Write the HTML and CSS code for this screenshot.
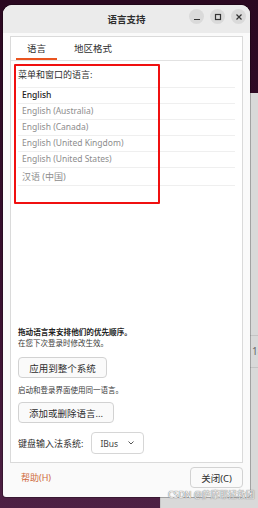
FILE: index.html
```html
<!DOCTYPE html>
<html>
<head>
    <title>语言支持</title>
    <meta name="viewport" content="width=device-width, initial-scale=1">
    <link rel="stylesheet" href="styles.css">
</head>
<body>
    <div class="desktop">
        <div class="back-window">
            <div class="back-row">18</div>
        </div>

        <div class="window">
            <div class="titlebar">
                <div class="title">语言支持</div>
                <div class="controls">
                    <span class="ctl">
                        <svg width="8" height="8" viewBox="0 0 8 8"><path d="M1 6.5h6" stroke="#333" stroke-width="1.2"/></svg>
                    </span>
                    <span class="ctl">
                        <svg width="8" height="8" viewBox="0 0 8 8"><rect x="1.5" y="1.5" width="5" height="5" fill="none" stroke="#333" stroke-width="1.2"/></svg>
                    </span>
                    <span class="ctl">
                        <svg width="8" height="8" viewBox="0 0 8 8"><path d="M1.5 1.5l5 5M6.5 1.5l-5 5" stroke="#333" stroke-width="1.2"/></svg>
                    </span>
                </div>
            </div>

            <div class="body">
                <div class="notebook">
                    <div class="tabs">
                        <div class="tab active">语言</div>
                        <div class="tab">地区格式</div>
                    </div>
                    <div class="page">
                        <div class="lang-list">
                            <div class="list-label">菜单和窗口的语言:</div>
                            <div class="row first">English</div>
                            <div class="row">English (Australia)</div>
                            <div class="row">English (Canada)</div>
                            <div class="row">English (United Kingdom)</div>
                            <div class="row">English (United States)</div>
                            <div class="row cjk">汉语 (中国)</div>
                        </div>
                        <div class="mark"></div>

                        <div class="settings">
                            <div class="hint bold">拖动语言来安排他们的优先顺序。</div>
                            <div class="hint">在您下次登录时修改生效。</div>
                            <button class="btn apply">应用到整个系统</button>
                            <div class="hint gap">启动和登录界面使用同一语言。</div>
                            <button class="btn add">添加或删除语言...</button>
                            <div class="im-row">
                                <span class="im-label">键盘输入法系统:</span>
                                <div class="select">
                                    <span>IBus</span>
                                    <svg width="8" height="6" viewBox="0 0 8 6"><path d="M1.5 1.5l2.5 2.5 2.5-2.5" fill="none" stroke="#555" stroke-width="1"/></svg>
                                </div>
                            </div>
                        </div>
                    </div>
                </div>

                <div class="footer">
                    <span class="help">帮助(H)</span>
                    <button class="btn close">关闭(C)</button>
                </div>
            </div>
        </div>

        <div class="watermark">CSDN @萨摩耶拯救团</div>
    </div>
</body>
</html>
```

FILE: styles.css
```css
body {
    margin: 0;
    font-family: "Noto Sans", "Noto Sans CJK SC", sans-serif;
    color: #333;
}
.desktop {
    position: relative;
    width: 258px;
    height: 508px;
    overflow: hidden;
    background: linear-gradient(180deg, #2a0820 0%, #3a1030 60%, #4e2144 100%);
}
.back-window {
    position: absolute;
    left: 160px;
    top: 93px;
    right: 0;
    bottom: 0;
    background: #d9d9d9;
    border-left: 1px solid #c8c8c8;
}
.back-row {
    margin-top: 242px;
    padding-left: 91px;
    height: 31px;
    line-height: 31px;
    font-size: 10px;
    color: #666;
    white-space: nowrap;
    border-top: 1px solid #c4c4c4;
    border-bottom: 1px solid #c4c4c4;
}
.window {
    position: absolute;
    left: 3px;
    top: 5px;
    width: 247px;
    height: 492px;
    display: flex;
    flex-direction: column;
    background: #fafafa;
    border-radius: 9px 9px 3px 3px;
    overflow: hidden;
    box-shadow: 0 0 0 1px rgba(0,0,0,0.25);
}
.titlebar {
    position: relative;
    height: 28px;
    background: #ebebeb;
    display: flex;
    align-items: center;
    justify-content: center;
}
.title {
    font-size: 9.5px;
    font-weight: bold;
    color: #2e2e2e;
}
.controls {
    position: absolute;
    right: 4px;
    top: 4px;
    display: flex;
    gap: 6px;
}
.ctl {
    width: 15px;
    height: 15px;
    border-radius: 50%;
    background: #dadada;
    display: flex;
    align-items: center;
    justify-content: center;
}
.body {
    flex: 1;
    display: flex;
    flex-direction: column;
    padding: 3px 7px 0 7px;
}
.notebook {
    height: 425px;
    border: 1px solid #dadada;
    background: #fff;
    display: flex;
    flex-direction: column;
}
.tabs {
    display: flex;
    height: 23px;
    padding-left: 5px;
    border-bottom: 1px solid #e2e2e2;
}
.tab {
    font-size: 9.5px;
    line-height: 23px;
    color: #2e2e2e;
    box-sizing: border-box;
    text-align: center;
}
.tab.active {
    width: 41px;
    border-bottom: 2px solid #e95420;
}
.tab + .tab {
    width: 72px;
}
.page {
    position: relative;
    flex: 1;
    display: flex;
    flex-direction: column;
    justify-content: space-between;
    padding: 6px 7px 8px 7px;
}
.list-label {
    font-size: 9px;
    line-height: 16px;
    height: 20px;
    color: #2e2e2e;
}
.row {
    height: 15px;
    line-height: 14px;
    border-top: 1px solid #efefef;
    padding-left: 4px;
    font-size: 8.5px;
    color: #8d8d8d;
}
.row.first {
    color: #222;
    font-weight: 500;
}
.row.cjk {
    height: 17px;
    line-height: 17px;
    font-size: 9px;
    border-bottom: 1px solid #efefef;
}
.mark {
    position: absolute;
    left: 3px;
    top: 3px;
    width: 142px;
    height: 136px;
    border: 2px solid #f01010;
    border-radius: 1px;
}
.settings {
    display: flex;
    flex-direction: column;
    align-items: flex-start;
}
.hint {
    font-size: 7.5px;
    line-height: 11px;
    color: #3a3a3a;
}
.hint.bold {
    font-size: 7.6px;
    font-weight: bold;
    color: #222;
}
.hint.gap {
    margin-top: 7px;
}
.btn {
    font-family: "Noto Sans", "Noto Sans CJK SC", sans-serif;
    font-size: 9.5px;
    color: #2e2e2e;
    background: #fafafa;
    border: 1px solid #d2d2d2;
    border-radius: 4px;
    height: 21px;
    padding: 0;
    box-sizing: border-box;
}
.btn.apply {
    width: 89px;
    margin-top: 8px;
}
.btn.add {
    width: 96px;
    margin-top: 6px;
}
.im-row {
    display: flex;
    align-items: center;
    gap: 8px;
    margin-top: 9px;
}
.im-label {
    font-size: 9px;
    color: #2e2e2e;
}
.select {
    width: 53px;
    height: 22px;
    box-sizing: border-box;
    border: 1px solid #d6d6d6;
    border-radius: 4px;
    display: flex;
    align-items: center;
    justify-content: space-between;
    padding: 0 8px;
    font-size: 8.5px;
    color: #444;
}
.footer {
    flex: 1;
    display: flex;
    justify-content: space-between;
    align-items: flex-start;
    padding-top: 4px;
}
.help {
    margin-left: 11px;
    margin-top: 3px;
    font-size: 9px;
    line-height: 16px;
    color: #cf6a3c;
}
.btn.close {
    width: 53px;
}
.watermark {
    position: absolute;
    left: 168px;
    top: 489px;
    font-size: 8.8px;
    line-height: 13px;
    white-space: nowrap;
    color: #f4f4f4;
    text-shadow: 0 0 1px #777, 0 0 1px #777;
}
```
